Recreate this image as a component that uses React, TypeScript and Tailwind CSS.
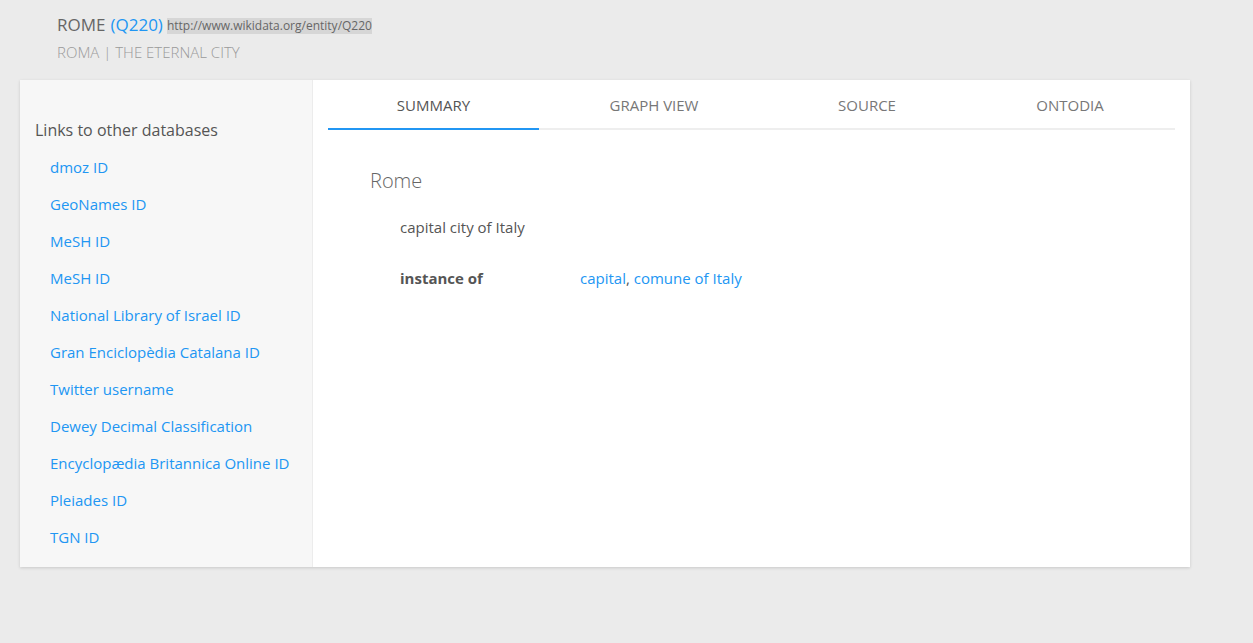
import React from "react";

const links = [
  "dmoz ID",
  "GeoNames ID",
  "MeSH ID",
  "MeSH ID",
  "National Library of Israel ID",
  "Gran Enciclopèdia Catalana ID",
  "Twitter username",
  "Dewey Decimal Classification",
  "Encyclopædia Britannica Online ID",
  "Pleiades ID",
  "TGN ID",
];

const tabs = [
  { t: "SUMMARY", w: "w-[211px]" },
  { t: "GRAPH VIEW", w: "w-[230px]" },
  { t: "SOURCE", w: "w-[196px]" },
  { t: "ONTODIA", w: "w-[210px]" },
];

export default function App() {
  return (
    <div
      className="min-h-[643px] w-full bg-[#ebebeb] text-[#555]"
      style={{ fontFamily: '"Open Sans", "Noto Sans", sans-serif' }}
    >
      <div className="pl-[57px] pt-[13px]">
        <div className="flex items-center h-[24px]">
          <span className="text-[17px] text-[#666]">ROME</span>
          <span className="text-[17px] text-[#2196f3] ml-[5px]">(Q220)</span>
          <span className="text-[12px] text-[#666] bg-[#d6d6d6] ml-[4px] leading-[16px] mt-[2px]">
            http://www.wikidata.org/entity/Q220
          </span>
        </div>
        <div className="h-[30px] flex items-center text-[15px] font-light text-[#9a9a9a]">
          ROMA | THE ETERNAL CITY
        </div>
      </div>

      <div className="ml-[20px] mt-[13px] w-[1170px] h-[487px] bg-white flex shadow-[0_1px_3px_rgba(0,0,0,0.15)]">
        <div className="w-[293px] shrink-0 bg-[#f7f7f7] border-r border-[#ececec] pl-[15px] pt-[38px]">
          <div className="text-[16px] text-[#555] h-[24px] leading-[24px]">
            Links to other databases
          </div>
          <div className="flex flex-col pl-[15px] mt-[7px]">
            {links.map((l, i) => (
              <a
                key={i}
                className="text-[15px] text-[#2196f3] h-[37px] leading-[37px] cursor-pointer"
              >
                {l}
              </a>
            ))}
          </div>
        </div>

        <div className="flex-1 px-[15px]">
          <div className="flex border-b-2 border-[#eeeeee]">
            {tabs.map((tab, i) => (
              <div
                key={tab.t}
                className={
                  tab.w +
                  " shrink-0 h-[50px] pt-[2px] flex items-center justify-center text-[15px] -mb-[2px] " +
                  (i === 0
                    ? "text-[#555] border-b-2 border-[#2196f3]"
                    : "text-[#777] border-b-2 border-transparent")
                }
              >
                {tab.t}
              </div>
            ))}
          </div>
          <div className="pl-[42px] pt-[37px]">
            <div className="text-[20px] font-light text-[#666] leading-[28px]">Rome</div>
            <div className="pl-[30px]">
              <div className="text-[15px] text-[#555] mt-[22px] leading-[20px]">
                capital city of Italy
              </div>
              <div className="flex text-[15px] leading-[20px] mt-[31px]">
                <div className="w-[180px] font-bold text-[#555]">instance of</div>
                <div className="text-[#555]">
                  <a className="text-[#2196f3]">capital</a>,{" "}
                  <a className="text-[#2196f3]">comune of Italy</a>
                </div>
              </div>
            </div>
          </div>
        </div>
      </div>
    </div>
  );
}
